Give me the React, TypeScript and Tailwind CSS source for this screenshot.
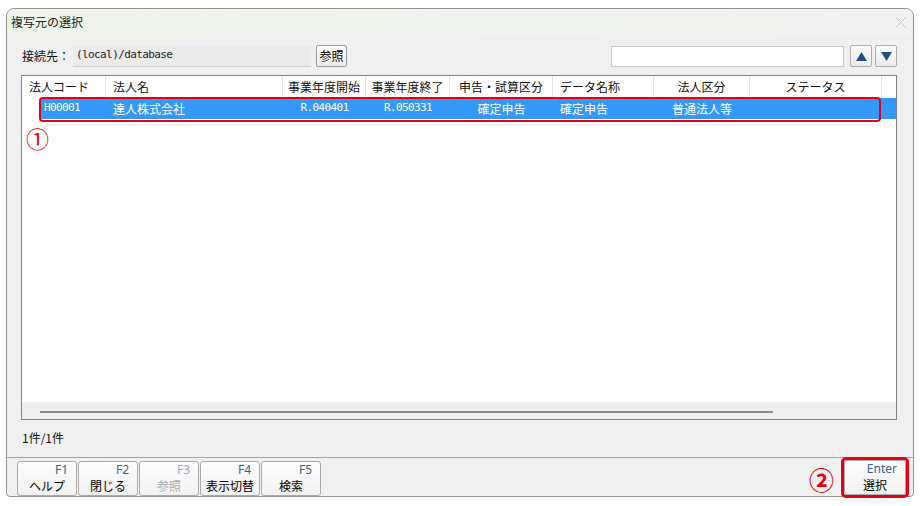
import React from 'react';

const JP = "font-['Noto_Sans_CJK_JP','Noto_Sans',sans-serif]";
const MONO = "font-['DejaVu_Sans_Mono','Noto_Sans_CJK_JP',monospace]";

type Col = { label: string; width: number; align: 'left' | 'center' };

const columns: Col[] = [
  { label: '法人コード', width: 84, align: 'left' },
  { label: '法人名', width: 177, align: 'left' },
  { label: '事業年度開始', width: 83, align: 'center' },
  { label: '事業年度終了', width: 84, align: 'center' },
  { label: '申告・試算区分', width: 103, align: 'center' },
  { label: 'データ名称', width: 101, align: 'left' },
  { label: '法人区分', width: 96, align: 'center' },
  { label: 'ステータス', width: 132, align: 'center' },
];

const row = ['H00001', '達人株式会社', 'R.040401', 'R.050331', '確定申告', '確定申告', '普通法人等', ''];

const fnKeys = [
  { key: 'F1', label: 'ヘルプ' },
  { key: 'F2', label: '閉じる' },
  { key: 'F3', label: '参照', disabled: true },
  { key: 'F4', label: '表示切替' },
  { key: 'F5', label: '検索' },
];

function FnButton({ k, label, disabled, width = 60 }: { k: string; label: string; disabled?: boolean; width?: number }) {
  return (
    <div
      className="h-[35px] flex flex-col rounded-[3px] border border-[#a9a9a9] bg-gradient-to-b from-[#fdfdfd] to-[#f1f1f1]"
      style={{ width }}
    >
      <div className={`h-[15px] pr-[8px] text-right text-[12px] leading-[15px] font-['Noto_Sans',sans-serif] ${disabled ? 'text-[#9aa7bb]' : 'text-[#3f5f8f]'}`}>
        {k}
      </div>
      <div className={`h-[18px] text-center text-[12px] leading-[18px] ${JP} ${disabled ? 'text-[#a8a8a8]' : 'text-black'}`}>
        {label}
      </div>
    </div>
  );
}

function Triangle({ up }: { up?: boolean }) {
  return (
    <div className="w-[22px] h-[22px] flex items-center justify-center rounded-[2px] border border-[#adadad] bg-gradient-to-b from-[#fbfbfb] to-[#ececec]">
      <svg width="11" height="9" viewBox="0 0 11 9">
        {up ? <polygon points="5.5,0 11,9 0,9" fill="#1f4f86" /> : <polygon points="0,0 11,0 5.5,9" fill="#1f4f86" />}
      </svg>
    </div>
  );
}

export default function App() {
  return (
    <div className={`w-[923px] h-[506px] bg-white pt-[8px] pl-[6px] ${JP}`}>
      <div className="w-[908px] h-[489px] flex flex-col border border-[#8f8f8f] rounded-t-[8px] rounded-b-[4px] bg-[#f0f0f0]">
        {/* title bar */}
        <div className="h-[26px] shrink-0 flex items-center justify-between pl-[4px] pr-[6px] rounded-t-[7px] bg-gradient-to-r from-[#eef4e9] to-[#f2f2f2]">
          <span className="text-[12px] text-[#222]">複写元の選択</span>
          <svg width="11" height="11" viewBox="0 0 11 11" className="mr-[1px]">
            <path d="M0.5 0.5 L10.5 10.5 M10.5 0.5 L0.5 10.5" stroke="#c4c4c4" strokeWidth="1" />
          </svg>
        </div>

        <div className="flex-1 flex flex-col pl-[14px] pr-[16px]">
          {/* connection row */}
          <div className="mt-[10px] h-[22px] flex items-center">
            <span className="w-[52px] pl-[1px] text-[12px] text-[#111]">接続先：</span>
            <div className={`w-[238px] h-[21px] flex items-center pl-[3px] bg-[#ebebeb] border-b border-[#d2d2d2] text-[11px] tracking-[-0.6px] text-[#222] ${MONO}`}>
              (local)/database
            </div>
            <div className="ml-[5px] w-[31px] h-[22px] flex items-center justify-center rounded-[2px] border border-[#9c9c9c] bg-gradient-to-b from-[#fcfcfc] to-[#ebebeb] text-[12px]">
              参照
            </div>
            <div className="flex-1" />
            <div className="w-[233px] h-[21px] bg-white border border-[#c8c8c8]" />
            <div className="ml-[6px] flex gap-[3px]">
              <Triangle up />
              <Triangle />
            </div>
          </div>

          {/* list */}
          <div className="mt-[8px] h-[345px] flex flex-col border border-[#828282] bg-white">
            <div className="relative flex-1">
              <div className="h-[22px] flex">
                {columns.map((c) => (
                  <div
                    key={c.label}
                    className={`h-full flex items-center border-r border-[#e3e3e3] text-[12px] text-[#111] whitespace-nowrap ${c.align === 'center' ? 'justify-center' : 'pl-[7px]'}`}
                    style={{ width: c.width }}
                  >
                    {c.label}
                  </div>
                ))}
              </div>

              <div className="h-[21px] flex">
                <div className="w-[19px] shrink-0" />
                <div className={`flex-1 flex bg-[#3399fb] text-white text-[11px] tracking-[-0.6px] ${MONO}`}>
                  {row.map((v, i) => {
                    const c = columns[i];
                    const w = i === 0 ? c.width - 19 : c.width;
                    return (
                      <div
                        key={i}
                        className={`h-full flex items-center whitespace-nowrap ${c.align === 'center' ? 'justify-center' : i === 0 ? 'pl-[3px]' : 'pl-[7px]'}`}
                        style={{ width: w }}
                      >
                        {/[ぁ-んァ-ヶ一-龯]/.test(v) ? (
                          <span className={`text-[12px] tracking-normal ${JP}`}>{v}</span>
                        ) : (
                          v
                        )}
                      </div>
                    );
                  })}
                </div>
              </div>

              {/* callout ① */}
              <div className="absolute left-[17px] top-[21px] w-[842px] h-[25px] rounded-[4px] border-2 border-[#e60012]" />
              <div className="absolute left-[4px] top-[49px] text-[23px] leading-[26px] text-[#e60012]">①</div>
            </div>

            {/* horizontal scroll */}
            <div className="h-[17px] shrink-0 flex items-center bg-[#efefef] pl-[18px]">
              <div className="w-[733px] h-[2px] mt-[3px] bg-[#8a8a8a]" />
            </div>
          </div>

          <div className="h-[35px] flex items-center pl-[1px] text-[12px] text-[#111]">1件/1件</div>
        </div>

        {/* function keys */}
        <div className="h-[39px] shrink-0 border-t border-[#a3a3a3] flex items-start pt-[3px] pl-[10px] pr-[7px]">
          <div className="flex gap-[1px]">
            {fnKeys.map((f) => (
              <FnButton key={f.key} k={f.key} label={f.label} disabled={f.disabled} />
            ))}
          </div>
          <div className="flex-1" />
          <div className="flex items-center">
            <span className="mr-[10px] mt-[2px] text-[25px] leading-[26px] font-bold text-[#e60012]">②</span>
            <div className="relative -mt-[1px]">
              <FnButton k="Enter" label="選択" width={62} />
              <div className="absolute -inset-[3px] rounded-[5px] border-[3px] border-[#e60012]" />
            </div>
          </div>
        </div>
      </div>
    </div>
  );
}
